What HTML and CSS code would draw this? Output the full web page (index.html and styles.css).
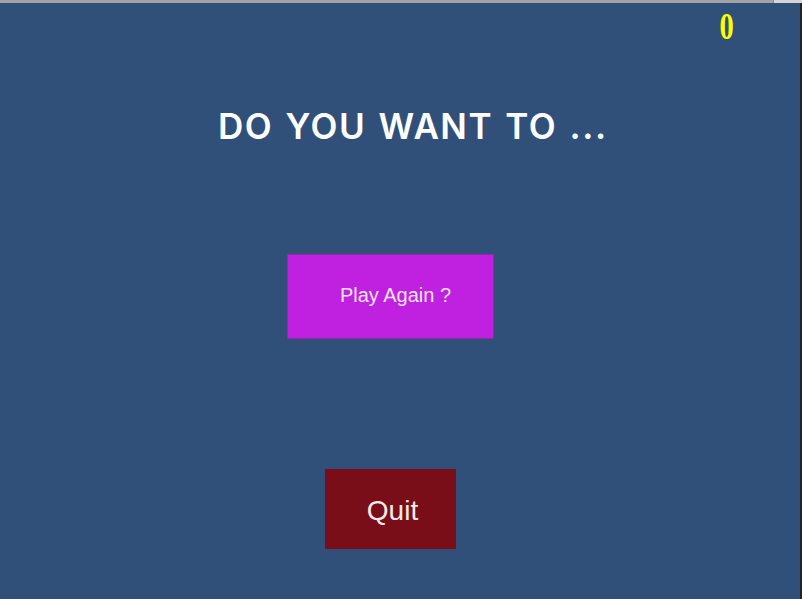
FILE: index.html
```html
<!DOCTYPE html>
<html>
<head>
<meta charset="utf-8">
<link rel="stylesheet" href="styles.css">
</head>
<body>
<div class="topbar"><div class="tb-left"></div><div class="tb-right"></div></div>
<div class="main">
  <div class="stage">
    <div class="score-row"><span class="score">0</span></div>
    <h1 class="title">DO YOU WANT TO ...</h1>
    <button class="btn btn-play">Play Again ?</button>
    <button class="btn btn-quit">Quit</button>
  </div>
  <div class="edge"></div>
</div>
</body>
</html>
```
FILE: styles.css
```css
html, body {
  margin: 0;
  padding: 0;
  height: 599px;
  overflow: hidden;
  background: #30507a;
}
.topbar {
  display: flex;
  height: 3px;
}
.tb-left {
  flex: 1;
  background: #a3a3a3;
}
.tb-right {
  width: 28px;
  background: #d6d6d6;
  border-left: 1px solid #8a8a8a;
}
.main {
  display: flex;
  height: 596px;
}
.stage {
  flex: 1;
  display: flex;
  flex-direction: column;
  align-items: flex-start;
}
.edge {
  width: 2px;
  background: #232323;
}
.score-row {
  align-self: stretch;
  display: flex;
  justify-content: flex-end;
  padding-right: 64px;
  height: 48px;
}
.score {
  font-family: "Liberation Serif", serif;
  font-weight: bold;
  font-size: 38px;
  line-height: 46px;
  color: #ffff00;
  transform: scaleX(0.75);
}
.title {
  margin: 55px 0 0 218px;
  font-family: "Inter", sans-serif;
  font-weight: 600;
  font-size: 35px;
  line-height: 40px;
  letter-spacing: 1.5px;
  word-spacing: 2px;
  color: #ffffff;
  white-space: nowrap;
}
.btn {
  border: none;
  padding: 0;
  font-family: "Liberation Sans", sans-serif;
  display: flex;
  align-items: center;
  justify-content: center;
}
.btn-play {
  margin: 108px 0 0 287px;
  width: 207px;
  height: 85px;
  background: #c020e0;
  border: 1px solid #8c2aa8;
  color: #f4e4f6;
  font-size: 20px;
  padding: 0 0 2px 10px;
}
.btn-quit {
  margin: 130px 0 0 325px;
  width: 131px;
  height: 80px;
  background: #7a0e18;
  color: #f6eaea;
  font-size: 28px;
  padding: 3px 0 0 4px;
}
```
